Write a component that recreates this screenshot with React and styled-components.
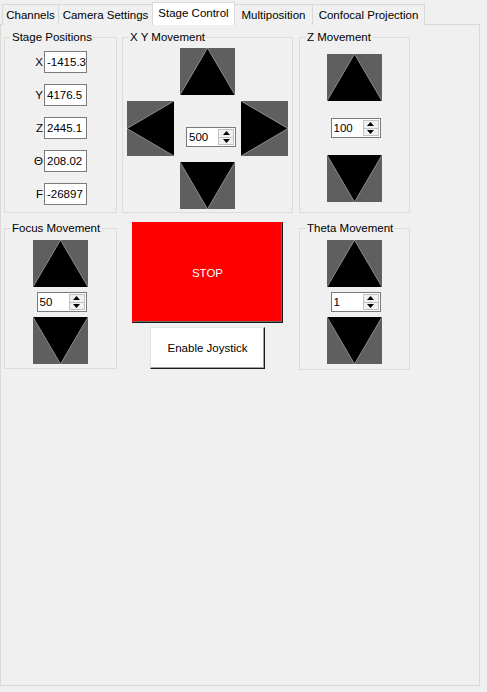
import React from 'react';
import styled, { createGlobalStyle } from 'styled-components';

const GlobalStyle = createGlobalStyle`
  html, body {
    margin: 0;
    padding: 0;
    background: #f0f0f0;
  }
  body {
    font-family: 'Liberation Sans', Arial, sans-serif;
    font-size: 11.5px;
    color: #000;
  }
`;

const Window = styled.div`
  width: 487px;
  height: 692px;
`;

const TabStrip = styled.div`
  display: flex;
  align-items: flex-end;
  height: 25px;
  padding-left: 2px;
  box-sizing: border-box;
`;

const Tab = styled.div`
  position: relative;
  z-index: ${p => (p.$active ? 2 : 0)};
  box-sizing: border-box;
  width: ${p => p.$width}px;
  height: ${p => (p.$active ? 23 : 21)}px;
  margin-left: -1px;
  padding-top: 2px;
  border: 1px solid #d9d9d9;
  border-bottom: none;
  background: ${p => (p.$active ? '#ffffff' : '#f0f0f0')};
  text-align: center;
  line-height: 16px;
  white-space: nowrap;
  &:first-child {
    margin-left: 0;
  }
`;

const Panel = styled.div`
  box-sizing: border-box;
  width: 480px;
  height: 662px;
  margin-top: -1px;
  border: 1px solid #d9d9d9;
  background: #f0f0f0;
  display: grid;
  grid-template-columns: 118px 177px 111px;
  grid-template-rows: 176px 141px;
  row-gap: 15px;
  align-content: start;
  justify-items: start;
  padding: 12px 0 0 3px;
`;

const Group = styled.div`
  box-sizing: border-box;
  width: ${p => p.$w}px;
  height: ${p => p.$h}px;
  border: 1px solid #dcdcdc;
`;

const GroupTitle = styled.div`
  width: fit-content;
  height: 16px;
  margin: -9px 0 -7px 6px;
  padding: 0 1px;
  background: #f0f0f0;
  line-height: 16px;
  white-space: nowrap;
`;

const PositionGrid = styled.div`
  display: grid;
  grid-template-columns: 38px 43px;
  column-gap: 1px;
  row-gap: 11px;
  align-items: center;
  padding-top: 13px;
`;

const AxisLabel = styled.span`
  text-align: right;
  line-height: 16px;
`;

const ValueBox = styled.input`
  box-sizing: border-box;
  width: 43px;
  height: 22px;
  margin: 0;
  padding: 0 0 0 2px;
  border: 1px solid #7a7a7a;
  background: #fff;
  color: #000;
  font: inherit;
  outline: none;
`;

const PadGrid = styled.div`
  display: grid;
  grid-template-columns: 47px 67px 47px;
  grid-template-rows: 47px 55px 47px;
  row-gap: 6px;
  padding: 10px 0 0 4px;
`;

const PadCell = styled.div`
  grid-column: ${p => p.$col};
  grid-row: ${p => p.$row};
  display: flex;
  justify-content: ${p => p.$justify || 'center'};
  align-items: ${p => p.$align || 'center'};
  padding: ${p => p.$pad || '0'};
`;

const StackBody = styled.div`
  display: flex;
  flex-direction: column;
  align-items: center;
  gap: ${p => p.$gap}px;
  padding-top: ${p => p.$top}px;
  padding-right: 1px;
  & > div {
    margin-left: 3px;
  }
`;

const ArrowPad = styled.button`
  display: block;
  box-sizing: border-box;
  width: ${p => p.$w}px;
  height: ${p => p.$h}px;
  padding: 0;
  border: none;
  background: #5f5f5f;
  cursor: pointer;
  svg {
    display: block;
  }
`;

const Spin = styled.div`
  box-sizing: border-box;
  display: flex;
  width: 50px;
  height: 20px;
  border: 1px solid #7a7a7a;
  background: #fff;
`;

const SpinValue = styled.input`
  flex: 1;
  min-width: 0;
  margin: 0;
  padding: 0 0 0 2px;
  border: none;
  background: transparent;
  color: #000;
  font: inherit;
  outline: none;
`;

const SpinButtons = styled.div`
  display: flex;
  flex-direction: column;
  width: 17px;
  padding: 1px 1px 1px 0;
  box-sizing: border-box;
`;

const SpinButton = styled.div`
  flex: 1;
  display: flex;
  align-items: center;
  justify-content: center;
  border: 1px solid #c2c2c2;
  background: #f0f0f0;
  & + & {
    margin-top: -1px;
  }
`;

const ActionColumn = styled.div`
  width: 171px;
  margin-top: -6px;
  display: flex;
  flex-direction: column;
  align-items: center;
  gap: 4px;
`;

const StopButton = styled.button`
  box-sizing: border-box;
  width: 151px;
  height: 101px;
  margin: 0;
  border: 1px solid #ff0000;
  border-right-color: #1a1a1a;
  border-bottom-color: #1a1a1a;
  box-shadow: inset -1px -1px 0 #6a6a6a;
  background: #ff0000;
  color: #fff;
  font: inherit;
  cursor: pointer;
`;

const PlainButton = styled.button`
  box-sizing: border-box;
  width: 115px;
  height: 42px;
  margin: 0;
  border: 1px solid #e3e3e3;
  border-right-color: #1a1a1a;
  border-bottom-color: #1a1a1a;
  box-shadow: inset -1px -1px 0 #a0a0a0;
  background: #fff;
  color: #000;
  font: inherit;
  cursor: pointer;
`;

const shapes = {
  up: { w: 55, h: 47, pts: '0,47 27.5,0 55,47', edge: '0,47 27.5,0 55,47' },
  down: { w: 55, h: 47, pts: '0,0 55,0 27.5,47', edge: '0,0 27.5,47 55,0' },
  left: { w: 47, h: 55, pts: '47,0 0,27.5 47,55', edge: '47,0 0,27.5 47,55' },
  right: { w: 47, h: 55, pts: '0,0 47,27.5 0,55', edge: '0,0 47,27.5 0,55' },
};

const ArrowButton = ({ dir }) => {
  const s = shapes[dir];
  return (
    <ArrowPad $w={s.w} $h={s.h} aria-label={dir}>
      <svg width={s.w} height={s.h} viewBox={`0 0 ${s.w} ${s.h}`}>
        <polygon points={s.pts} fill="#000" />
        <polyline points={s.edge} fill="none" stroke="#a3a3a3" strokeWidth="0.8" />
      </svg>
    </ArrowPad>
  );
};

const SpinBox = ({ value }) => (
  <Spin>
    <SpinValue defaultValue={value} />
    <SpinButtons>
      <SpinButton>
        <svg width="7" height="4" viewBox="0 0 7 4"><polygon points="0,4 3.5,0 7,4" fill="#000" /></svg>
      </SpinButton>
      <SpinButton>
        <svg width="7" height="4" viewBox="0 0 7 4"><polygon points="0,0 7,0 3.5,4" fill="#000" /></svg>
      </SpinButton>
    </SpinButtons>
  </Spin>
);

const tabs = [
  { label: 'Channels', width: 57 },
  { label: 'Camera Settings', width: 95 },
  { label: 'Stage Control', width: 83, active: true },
  { label: 'Multiposition', width: 79 },
  { label: 'Confocal Projection', width: 113 },
];

const positions = [
  { axis: 'X', value: '-1415.3' },
  { axis: 'Y', value: '4176.5' },
  { axis: 'Z', value: '2445.1' },
  { axis: 'Θ', value: '208.02' },
  { axis: 'F', value: '-26897' },
];

const UpDownGroup = ({ title, w, h, value, top, gap }) => (
  <Group $w={w} $h={h}>
    <GroupTitle>{title}</GroupTitle>
    <StackBody $top={top} $gap={gap}>
      <ArrowButton dir="up" />
      <SpinBox value={value} />
      <ArrowButton dir="down" />
    </StackBody>
  </Group>
);

export default function App() {
  return (
    <Window>
      <GlobalStyle />
      <TabStrip>
        {tabs.map(t => (
          <Tab key={t.label} $width={t.width} $active={t.active}>{t.label}</Tab>
        ))}
      </TabStrip>
      <Panel>
        <Group $w={113} $h={176}>
          <GroupTitle>Stage Positions</GroupTitle>
          <PositionGrid>
            {positions.map(p => (
              <React.Fragment key={p.axis}>
                <AxisLabel>{p.axis}</AxisLabel>
                <ValueBox defaultValue={p.value} />
              </React.Fragment>
            ))}
          </PositionGrid>
        </Group>

        <Group $w={171} $h={176}>
          <GroupTitle>X Y Movement</GroupTitle>
          <PadGrid>
            <PadCell $col={2} $row={1}><ArrowButton dir="up" /></PadCell>
            <PadCell $col={1} $row={2}><ArrowButton dir="left" /></PadCell>
            <PadCell $col={2} $row={2} $justify="flex-start" $align="flex-end" $pad="0 0 9px 12px">
              <SpinBox value="500" />
            </PadCell>
            <PadCell $col={3} $row={2}><ArrowButton dir="right" /></PadCell>
            <PadCell $col={2} $row={3}><ArrowButton dir="down" /></PadCell>
          </PadGrid>
        </Group>

        <UpDownGroup title="Z Movement" w={111} h={176} value="100" top={16} gap={17} />

        <UpDownGroup title="Focus Movement" w={113} h={141} value="50" top={11} gap={5} />

        <ActionColumn>
          <StopButton>STOP</StopButton>
          <PlainButton>Enable Joystick</PlainButton>
        </ActionColumn>

        <UpDownGroup title="Theta Movement" w={111} h={142} value="1" top={11} gap={5} />
      </Panel>
    </Window>
  );
}
